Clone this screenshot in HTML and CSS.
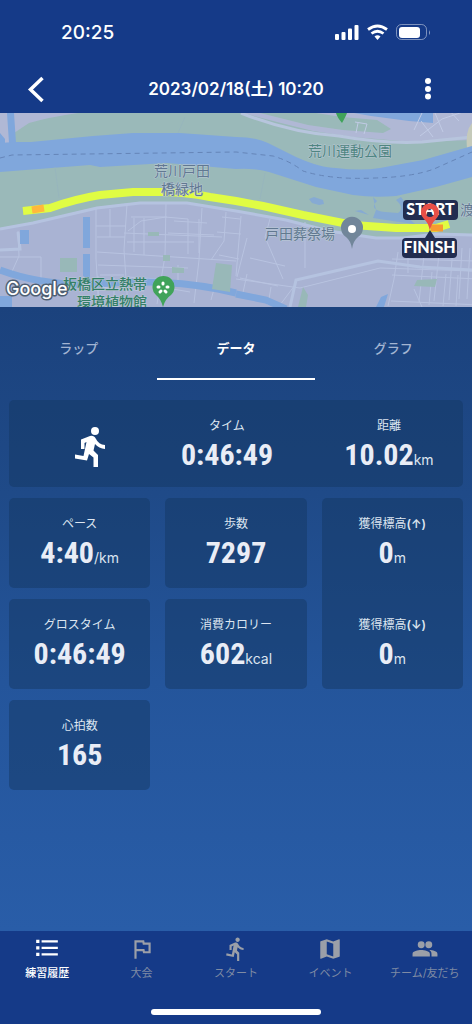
FILE: index.html
```html
<!DOCTYPE html>
<html lang="ja">
<head>
<meta charset="utf-8">
<meta name="viewport" content="width=device-width, initial-scale=1">
<title>2023/02/18(土) 10:20</title>
<link rel="stylesheet" href="styles.css">
</head>
<body>
<div class="app">
  <div class="status">
    <span class="clock">20:25</span>
    <svg class="status-icons" viewBox="0 0 98 18" width="98" height="18" aria-hidden="true">
      <g fill="#fff">
        <rect x="1" y="11" width="4" height="6" rx="1"/><rect x="7.500" y="9" width="4" height="8" rx="1"/>
        <rect x="14" y="5.500" width="4" height="11.500" rx="1"/><rect x="20.500" y="2" width="4" height="15" rx="1"/>
        <rect x="65" y="4" width="21" height="11" rx="3"/>
        <path d="M95 7v5q2-2 0-5" opacity=".5"/>
        <path d="M40.500 13.500q3-2.500 6 0l-3 3.500z"/>
      </g>
      <g fill="none" stroke="#fff" stroke-width="2.800"><path d="M34 6.500q9.500-7 19 0M37.500 10.500q6-4.500 12 0"/></g>
      <rect x="62.500" y="1.500" width="30" height="15" rx="5" fill="none" stroke="#fff" opacity=".45"/>
    </svg>
  </div>
  <header class="header">
    <button class="icon-btn" aria-label="戻る"><svg viewBox="0 0 24 28" width="24" height="28"><path d="M18.500 3 6.500 14.500l12 11.500" fill="none" stroke="#fff" stroke-width="3.500"/></svg></button>
    <h1 class="title">2023/02/18(土) 10:20</h1>
    <button class="icon-btn" aria-label="メニュー"><svg viewBox="0 0 24 28" width="24" height="28" fill="#fff"><circle cx="12" cy="6" r="3"/><circle cx="12" cy="14" r="3"/><circle cx="12" cy="21.500" r="3"/></svg></button>
  </header>

  <svg class="map" viewBox="0 0 472 194" preserveAspectRatio="xMidYMid slice" role="img" aria-label="コースの地図">
    <rect width="472" height="194" fill="#a9b3d3"/>
    <path fill="#9ab9b9" d="M0 0h472v122l-36-1-33 4-27 0-47-8-43-10-50-9-49-8-47-1-43 5-64 15-33 6z"/>
    <path fill="#b0b8d5" d="M0 0h78Q50 4 29 10L14 20v10H0zM243 0l34 9 36 9 40 6 60 5 59-2V0z"/>
    <path fill="#9ab9b9" d="M260 0h56l26 4 35 3 14 9-8 4-40-3-35-5z"/>
    <path fill="#80a7dc" d="M354 0l17 3 38 5 24 2V0zM7 0h7l2 30H9zM0 20l5 6v8H0z"/>
    <path fill="none" stroke="#b7c5dd" stroke-width="3" d="M241 0q50 20 98 23 45 8 83 6l50-5"/>
    <path fill="none" stroke="#c1cbe5" d="m355 9 12 2-3 10m-6-11-2 10m58-3 8-17m-2 23 22-17 21-7m-42 9 12 16m2-24 8 19m5-23 11 12"/>
    <path fill="#c5caba" d="M472 10q-7 8-5 27l5 4z"/>
    <path fill="#80a7dc" d="M0 30l14-1 17 0 62-6 40-3h47l56 4q20 0 32 6l28 14q25 11 40 11 25 3 44 0l43-8 49-14v31l-36 10-40 9q-22 2-43-1l-37-8-47-15q-15-4-33-3l-69-6-67 4-10-2-90 7z"/>
    <path fill="none" stroke="#95b4bd" stroke-width="1" opacity=".7" d="m55 54 4 31M265 60l-5 26M185 4l-7 16"/>
    <path fill="#86aad3" d="m309 86 5-2 9 3 1 4-5 1-7-2zM355 98l6-1 8 5zM373 84l4 4q-9 9 8 11l13 1q7-5-2-13l5-3 8 11-3 8 9 8-16-2-26-4 3-8z"/>
    <path class="boundary" d="M0 45l12-3 224-3 37 4q17 5 30 15 28 9 72 7 37-1 59-9l38-17"/>

    <path class="road-main" d="M0 116l33-6 64-15 43-5h47l49 8 50 9 43 11 47 7 27 0 33-4 36 1"/>
    <g class="roads">
      <path d="M96 96v50l3 47M127 91l-3 46 4 57M166 90l-1 53-8 48M202 95l-3 52-5 43M226 99l-2 29-13 19M0 144h41v22M18 118l1 25-9 20M96 113h30m-29 26 139 9M98 152l90 3M110 96v28m-13 0h28m6-20h36m-39 14 13-10 25-4m-39 25h67m-70-9 98 4m-88-19v34m10-34v37m21-38 23 2v35m11-35v34m-25-32 33 2m-39 10 46 2m8-18 18 2m-23 13 24 2m-22 21 20 4M100 162h24m4 2 30 2m20-14v17m-46 0 58 10m-92-16v28m16-26v21m-26-13 56 5m103-17-5 23m-25-19-6 22"/>
      <path d="m236 166 64 9 80-20 92 3M241 103l-5 60m34-57-5 18 18 42m22-57v46m-55-10 35 8m-45 12 38 8m-31-48-10 39m58 8-15 20m-12 0 3-18m127-35-4 27-6 27m20-63v30m17-27-6 56m21-57-6 56m19-55-4 54m13-52-3 51m11-51-3 51m-75-40 84 2m-84 14 86 4m-87 22 89 4m-88 7 89 3M414 176l8 18m10-35-3 33m17-31-3 32m15-31-2 31"/>
    </g>
    <path class="road-main" d="m290 194 6-27 82-19 42 6 52 3M0 137l20-1-2-17"/>
    <path fill="none" stroke="#80a7dc" stroke-width="7" d="M0 157q43 16 95 14 70-6 123 5l18 4m0 1 30 6 20 9"/>
    <path fill="#80a7dc" d="M83 104h7v31h-7zm0 37h7v26l-7-4zM20 117h9v14h-9zM376 194l5-10 7-3-4 13zM0 183h12v11H0z"/>
    <path fill="#98b8b8" d="M60 145h17v14H60zM216 150l16 2-2 27-18-3zM148 119h11v4h-11zM163 142h7v6h-7zM172 154l12 1v5h-12zM417 167l20-1-2 8-21-1zM303 174l5 8-2 12h-8z"/>

    <path class="route" d="m23 98 27-3q25-9 50-13l33-3h27q25 0 50 5l26 4 27 5 40 9 50 10 43 3h40l13-4"/>
    <path stroke="#ffb83c" stroke-width="7" d="m32 97 12-2"/>
    <path stroke="#f69a31" stroke-width="7" d="M431 115h12"/>

    <g class="place">
      <text x="182" y="63">荒川戸田</text><text x="182" y="81">橋緑地</text>
      <text class="park" x="350" y="43">荒川運動公園</text>
      <text x="300" y="126">戸田葬祭場</text>
      <text x="467" y="102">渡</text>
      <text class="garden" x="105" y="176">板橋区立熱帯</text><text class="garden" x="112" y="194">環境植物館</text>
    </g>
    <path fill="#40a35a" d="M163 194q-2-8-7-12a11 11 0 1 1 15 0q-6 4-8 12zM336 0h11q-1 3-5 10-5-6-6-10"/>
    <path fill="none" stroke="#fff" stroke-width="3" stroke-linecap="round" d="M163 170v1m4 3h1m-3 4 1 1m-5-1-1 1m-1-5h-1"/>
    <path fill="#71869a" d="M352 136q-1-8-6-12a11 11 0 1 1 12 0q-5 4-6 12z"/><circle cx="352" cy="116" r="4" fill="#fff"/>

    <path fill="#222d50" d="M430 117l5 8h-10z"/>
    <rect x="403" y="87" width="55" height="20" rx="4" fill="#222d50"/>
    <rect x="402" y="125" width="55" height="20" rx="4" fill="#222d50"/>
    <text class="flag" x="430.500" y="102">START</text>
    <text class="flag" x="429.500" y="140">FINISH</text>
    <path fill="#e94f47" fill-rule="evenodd" d="M430 118q-2-9-6-12a9 9 0 1 1 12 0q-5 5-6 12zM426 100a4 4 0 1 0 8 0 4 4 0 1 0-8 0z"/>
    <text class="google" x="6" y="182">Google</text>
  </svg>

  <main class="main">
    <nav class="tabs" aria-label="表示">
      <button class="tab">ラップ</button>
      <button class="tab active" aria-current="true">データ</button>
      <button class="tab">グラフ</button>
    </nav>
    <div class="stats">
      <section class="card summary">
        <svg class="runner" viewBox="0 0 30 40" aria-label="ランニング"><circle cx="20" cy="4" r="4"/><path d="M6 12.500 15 9q4-.8 6 3 2.500 5.500 9 6v4q-6-.5-10-5l-1.500 6.500 4.500 4.500V40h-4.500V30.500L14 27l-2 6.500L0 31.500v-4l8.500 1.500 3-14-2 1v6H6z"/></svg>
        <div class="metric"><span class="label">タイム</span><p class="value">0:46:49</p></div>
        <div class="metric"><span class="label">距離</span><p class="value">10.02<small>km</small></p></div>
      </section>
      <section class="card metric"><span class="label">ペース</span><p class="value">4:40<small>/km</small></p></section>
      <section class="card metric"><span class="label">歩数</span><p class="value">7297</p></section>
      <section class="card elevation">
        <div class="metric"><span class="label">獲得標高<b>(↑)</b></span><p class="value">0<small>m</small></p></div>
        <div class="metric"><span class="label">獲得標高<b>(↓)</b></span><p class="value">0<small>m</small></p></div>
      </section>
      <section class="card metric"><span class="label">グロスタイム</span><p class="value">0:46:49</p></section>
      <section class="card metric"><span class="label">消費カロリー</span><p class="value">602<small>kcal</small></p></section>
      <section class="card metric"><span class="label">心拍数</span><p class="value">165</p></section>
    </div>
  </main>

  <footer class="bottom">
    <nav class="nav" aria-label="メイン">
      <a class="nav-item current" href="#history"><svg viewBox="0 0 24 24"><path d="M2 3.500h3v3H2zm0 6h3v3H2zm0 6h3v3H2zM7 4h15v2H7zm0 6h15v2H7zm0 6h15v2H7z"/></svg>練習履歴</a>
      <a class="nav-item" href="#race"><svg viewBox="0 0 24 24"><path d="m12.360 6 .4 2H18v6h-3.360l-.4-2H7V6zM14 4H5v17h2v-7h5.600l.4 2h7V6h-5.600z"/></svg>大会</a>
      <a class="nav-item" href="#start"><svg viewBox="0 0 24 24"><path d="M13.490 5.480c1.100 0 2-.9 2-2s-.9-2-2-2-2 .9-2 2 .9 2 2 2zm-3.600 13.900 1-4.400 2.100 2v6h2v-7.500l-2.100-2 .6-3c1.300 1.500 3.300 2.500 5.500 2.500v-2c-1.900 0-3.500-1-4.300-2.400l-1-1.600c-.4-.6-1-1-1.700-1-.3 0-.5.1-.8.1l-5.200 2.200v4.700h2v-3.400l1.800-.7-1.600 8.100-4.900-1-.4 2 7 1.400z"/></svg>スタート</a>
      <a class="nav-item" href="#event"><svg viewBox="0 0 24 24"><path d="M20.500 3l-.16.030L15 5.100 9 3 3.360 4.900c-.21.070-.36.250-.36.480V20.500c0 .28.220.5.500.5l.16-.03L9 18.900l6 2.100 5.640-1.900c.21-.07.360-.25.360-.48V3.500c0-.28-.22-.5-.5-.5zM15 19l-6-2.110V5l6 2.110V19z"/></svg>イベント</a>
      <a class="nav-item" href="#team"><svg viewBox="0 0 24 24"><circle cx="8.500" cy="8" r="3.200"/><circle cx="15.500" cy="8" r="3.200"/><path d="M.5 19v-2.500c0-2.500 5-3.500 8-3.500s8 1 8 3.500V19zM16 13c3 0 7.500 1 7.500 3.500V19H18v-2.500c0-1.700-.8-2.600-2-3.500z"/></svg>チーム/友だち</a>
    </nav>
    <div class="home-bar"></div>
  </footer>
</div>
</body>
</html>
```

FILE: styles.css
```css
* { box-sizing: border-box; }

body {
  margin: 0;
  font-family: Inter, "Noto Sans CJK JP", sans-serif;
  color: #fff;
  background: #153a88;
}

button {
  border: 0;
  padding: 0;
  background: none;
  color: inherit;
  font: inherit;
}

.app {
  display: flex;
  flex-direction: column;
  min-height: 100vh;
}

.status {
  display: flex;
  align-items: center;
  justify-content: space-between;
  height: 64px;
  padding: 0 40px 0 61px;
}

.clock { font-size: 19px; font-weight: 500; }

.header {
  display: grid;
  grid-template-columns: 1fr auto 1fr;
  align-items: center;
  height: 49px;
  padding: 0 24px;
}

.icon-btn { display: flex; }
.icon-btn:last-child { justify-self: end; margin-right: 8px; }

.title {
  margin: 0;
  font-size: 17px;
  font-weight: 600;
  line-height: 24px;
}

.map { display: block; width: 100%; }

.boundary {
  fill: none;
  stroke: #6585b8;
  stroke-width: 1;
  stroke-dasharray: 5 4;
}

.roads { fill: none; stroke: #b8c3e0; stroke-width: 1; }
.road-main { fill: none; stroke: #b5c3e0; stroke-width: 3; }
.route { fill: none; stroke: #e0fc43; stroke-width: 8; }

.place {
  font-family: "Noto Sans CJK JP", sans-serif;
  font-size: 14px;
  text-anchor: middle;
  fill: #617891;
  stroke: #bac9d5;
  stroke-width: 1px;
  paint-order: stroke;
}

.park { fill: #4e8581; }
.garden { fill: #347f68; font-weight: 500; }

.flag {
  font-family: Lato, sans-serif;
  font-size: 16px;
  font-weight: 900;
  text-anchor: middle;
  fill: #fff;
}

.google {
  font-family: Inter, sans-serif;
  font-size: 18px;
  font-weight: 500;
  fill: #fff;
  stroke: #4e5f73;
  stroke-width: 3px;
  stroke-linejoin: round;
  paint-order: stroke;
}

.main {
  flex: 1;
  background: linear-gradient(#1b427d, #1f4a88 30%, #24559b 60%, #295da8);
}

.tabs { display: grid; grid-template-columns: repeat(3, 1fr); }

.tab {
  height: 73px;
  padding-top: 10px;
  border-bottom: 2px solid transparent;
  font-size: 13px;
  font-weight: 500;
  color: #a3b5d2;
}

.tab.active { color: #fff; font-weight: 700; border-color: #fff; }

.stats {
  display: grid;
  grid-template-columns: repeat(3, 1fr);
  gap: 11px 15px;
  padding: 20px 9px;
}

.card {
  border-radius: 5px;
  background: rgba(20, 55, 100, 0.5);
}

.summary {
  grid-column: 1 / -1;
  display: grid;
  grid-template-columns: 130fr 120fr 148fr;
  column-gap: 28px;
  align-items: center;
  height: 87px;
}

.runner {
  width: 30px;
  height: 40px;
  margin: 4px 34px 0 0;
  justify-self: end;
  fill: #fff;
}

.metric {
  display: flex;
  flex-direction: column;
  align-items: center;
  height: 90px;
  padding-top: 16px;
}

.elevation {
  display: grid;
  gap: 11px;
  grid-row: 2 / 4;
  grid-column: 3;
}

.label { font-size: 12px; line-height: 20px; color: #dde5f0; }
.label b { font-weight: 600; }

.value {
  margin: 0;
  font-family: "Roboto Condensed", "Liberation Sans Narrow", Roboto, sans-serif;
  font-size: 30px;
  font-weight: 700;
  line-height: 38px;
  color: #e9edf6;
}

.value small {
  font-family: Inter, sans-serif;
  font-size: 14px;
  font-weight: 400;
  color: #dde5f0;
}

.bottom { padding-bottom: 9px; }

.nav { display: grid; grid-template-columns: repeat(5, 1fr); height: 78px; }

.nav-item {
  display: flex;
  flex-direction: column;
  align-items: center;
  padding-top: 5px;
  font-size: 11px;
  line-height: 22px;
  color: #7f8ba4;
  text-decoration: none;
  white-space: nowrap;
}

.nav-item svg { width: 26px; height: 26px; fill: #9b9fa8; }
.nav-item.current { color: #fff; font-weight: 500; }
.nav-item.current svg { fill: #fff; }

.home-bar {
  width: 36%;
  height: 6px;
  margin: 0 auto;
  border-radius: 3px;
  background: #fff;
}
```
